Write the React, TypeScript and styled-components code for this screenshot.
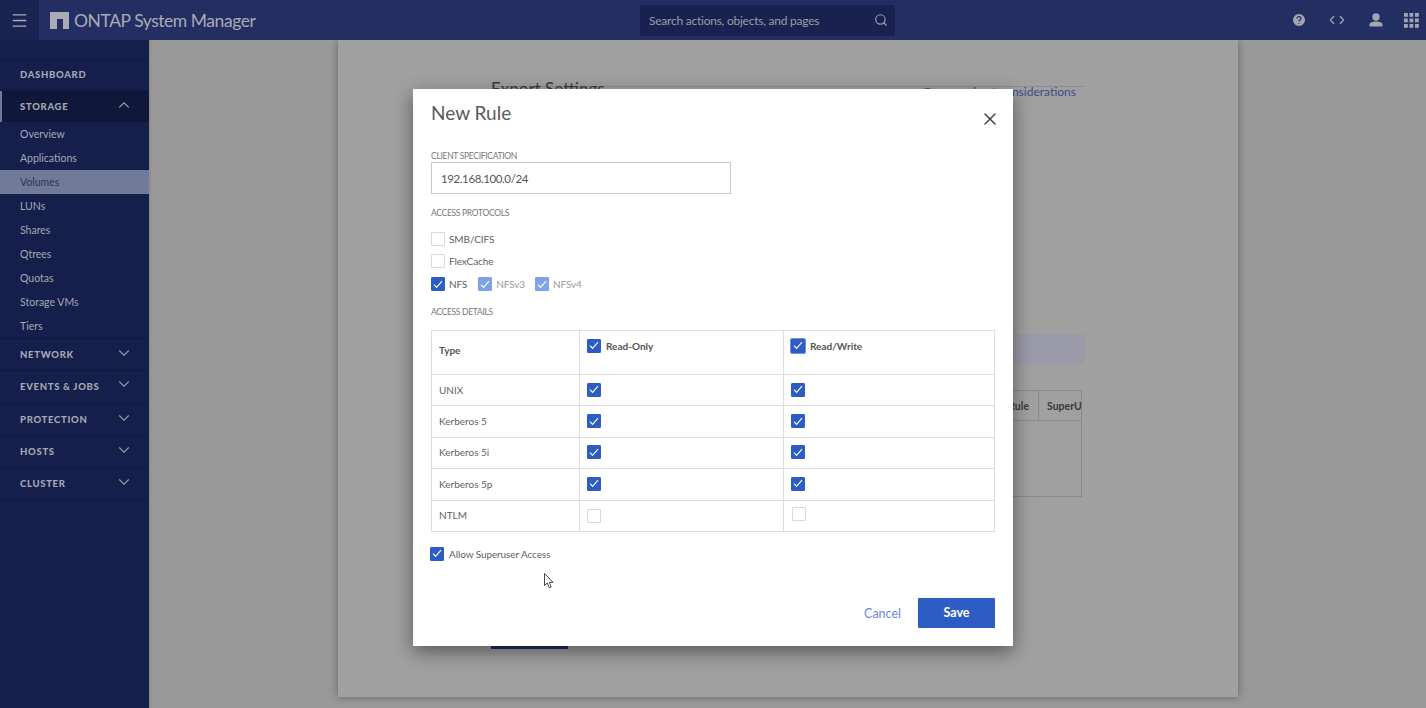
import { createGlobalStyle, styled } from "styled-components";
import { ChevronDown, ChevronUp, Search, X, Menu, CircleHelp } from "lucide-react";

const FONT = `Lato, "Noto Sans", "Liberation Sans", sans-serif`;

const GlobalStyle = createGlobalStyle`
  html, body { margin: 0; padding: 0; height: 100%; overflow: hidden; background: #999999; }
  body { font-family: ${FONT}; }
  * { box-sizing: border-box; }
`;

const Page = styled.div`
  position: relative;
  width: 1426px;
  height: 708px;
  overflow: hidden;
  display: flex;
  flex-direction: column;
  background: #999999;
`;

/* top bar */
const Header = styled.header`
  height: 40px;
  flex: none;
  display: flex;
  align-items: center;
  background: #232f63;
  position: relative;
  z-index: 2;
`;
const MenuBtn = styled.div`
  width: 39px;
  height: 40px;
  display: flex;
  align-items: center;
  justify-content: center;
  background: #1a2453;
  color: #a7a9b3;
`;
const Brand = styled.div`
  display: flex;
  align-items: center;
  gap: 5px;
  margin-left: 11px;
  width: 590px;
  color: #a9abb5;
  font-size: 17.5px;
  letter-spacing: -0.45px;
  white-space: nowrap;
`;
const SearchBox = styled.div`
  width: 255px;
  height: 31px;
  display: flex;
  align-items: center;
  justify-content: space-between;
  padding: 0 7px 0 9px;
  background: #18214f;
  color: #9c9eab;
  font-size: 12px;
  letter-spacing: -0.24px;
`;
const HeaderIcons = styled.div`
  margin-left: auto;
  display: flex;
  align-items: center;
  gap: 22px;
  padding-right: 7px;
  color: #a3a5b0;
`;
const GridIcon = styled.svg`
  margin-left: -3px;
`;

/* body */
const Body = styled.div`
  flex: 1;
  display: flex;
  min-height: 0;
`;
const Side = styled.nav`
  width: 149px;
  flex: none;
  padding-top: 19px;
  background: #141f4c;
  box-shadow: 2px 0 0 #8f8f8f;
`;
const Section = styled.div<{ $open?: boolean; $h?: number; $pb?: number }>`
  height: ${(p) => p.$h ?? 32}px;
  display: flex;
  align-items: center;
  justify-content: space-between;
  padding: 0 16px ${(p) => p.$pb ?? 0}px 20px;
  border-top: 1px solid #10183c;
  background: ${(p) => (p.$open ? "#10183a" : "transparent")};
  box-shadow: ${(p) => (p.$open ? "inset 2px 0 0 #6f7b99" : "none")};
  color: #a6a8b2;
  font-size: 9.5px;
  font-weight: 900;
  letter-spacing: 0.7px;
  white-space: nowrap;
  svg {
    flex: none;
    margin-top: -4px;
    color: #9295a3;
  }
`;
const SubItem = styled.div<{ $active?: boolean }>`
  height: 24px;
  display: flex;
  align-items: center;
  padding-left: 20px;
  font-size: 10.5px;
  color: ${(p) => (p.$active ? "#2d3550" : "#a6a8b2")};
  background: ${(p) => (p.$active ? "#6f7b99" : "transparent")};
`;
const SideEnd = styled.div`
  border-top: 1px solid #10183c;
`;

/* page behind the dialog */
const Main = styled.main`
  flex: 1;
  padding-left: 189px;
`;
const Card = styled.section`
  width: 900px;
  height: 657px;
  padding: 46px 153px 0;
  background: #a0a0a0;
  box-shadow: 0 0 8px rgba(0, 0, 0, 0.35);
`;
const CardHead = styled.div`
  height: 260px;
  width: 594px;
  border-top: 1px solid #8e8e8e;
  display: flex;
  justify-content: space-between;
  align-items: flex-start;
  padding: 0 9px 0 0;
`;
const CardTitle = styled.span`
  margin-top: -6px;
  font-size: 17px;
  line-height: 16px;
  color: #3a3a3a;
`;
const CardLink = styled.span`
  margin-top: -1px;
  color: #3e4a85;
  font-size: 12px;
  line-height: 11px;
`;
const Band = styled.div`
  width: 594px;
  height: 30px;
  margin-top: -12px;
  background: #9a9aa8;
`;
const GhostTable = styled.div`
  margin: 26px 0 0 445px;
  width: 146px;
  height: 107px;
  border: 1px solid #8a8a8a;
  display: flex;
  justify-content: flex-end;
  align-items: flex-start;
  color: #3a3a3a;
  font-size: 10.5px;
  font-weight: 700;
`;
const GhostCell = styled.div`
  height: 30px;
  line-height: 30px;
  border-bottom: 1px solid #8a8a8a;
  white-space: nowrap;
`;
const GhostRule = styled(GhostCell)`
  flex: 1;
  padding-right: 9px;
  text-align: right;
`;
const GhostSuper = styled(GhostCell)`
  width: 43px;
  padding-left: 8px;
  border-left: 1px solid #8a8a8a;
`;
const GhostButton = styled.div`
  width: 77px;
  height: 30px;
  margin-top: 122px;
  background: #1c2a66;
`;

/* dialog */
const Dialog = styled.div`
  position: absolute;
  left: 413px;
  top: 89px;
  z-index: 3;
  width: 600px;
  height: 557px;
  padding: 0 18px;
  background: #ffffff;
  box-shadow: 0 6px 18px rgba(0, 0, 0, 0.45);
  color: #5c5c5c;
`;
const TitleRow = styled.div`
  height: 61px;
  display: flex;
  align-items: flex-start;
  justify-content: space-between;
  padding-top: 12px;
`;
const Title = styled.h2`
  margin: 0;
  font-size: 19px;
  font-weight: 400;
  line-height: 24px;
  color: #5a5a5a;
`;
const CloseBtn = styled.div`
  color: #444444;
  margin: 8px -5px 0 0;
  height: 20px;
`;
const Label = styled.div`
  font-size: 8.5px;
  line-height: 12px;
  color: #777777;
  letter-spacing: -0.3px;
`;
const Field = styled.div`
  width: 300px;
  height: 32px;
  margin: 0 0 13px;
  display: flex;
  align-items: center;
  padding-left: 9px;
  border: 1px solid #c9c9c9;
  font-size: 11.5px;
  letter-spacing: -0.4px;
  color: #555555;
`;
const Row = styled.div<{ $top?: number; $mb?: number; $left?: number }>`
  display: flex;
  align-items: center;
  height: 14px;
  margin: ${(p) => p.$top ?? 0}px 0 ${(p) => p.$mb ?? 0}px ${(p) => p.$left ?? 0}px;
`;
const Option = styled.label<{ $muted?: boolean; $gap?: number; $inner?: number }>`
  display: flex;
  align-items: center;
  gap: ${(p) => p.$inner ?? 4}px;
  margin-right: ${(p) => p.$gap ?? 0}px;
  font-size: 10px;
  letter-spacing: -0.1px;
  color: ${(p) => (p.$muted ? "#9a9a9a" : "#5f5f5f")};
`;
const Box = styled.span<{ $on?: boolean; $muted?: boolean; $focus?: boolean }>`
  width: 14px;
  height: 14px;
  flex: none;
  display: inline-flex;
  align-items: center;
  justify-content: center;
  border-radius: 1px;
  border: 1px solid ${(p) => (p.$on ? (p.$muted ? "#7fa3e6" : "#2d5cc5") : "#d9d9d9")};
  background: ${(p) => (p.$on ? (p.$muted ? "#7fa3e6" : "#2d5cc5") : "#fff")};
  box-shadow: ${(p) => (p.$focus ? "0 0 0 1px #6d8fe0" : "none")};
`;
const Check = () => (
  <svg width="10" height="9" viewBox="0 0 10 9" fill="none" stroke="#fff" strokeWidth="1.1">
    <path d="M1 4.6 L3.6 7.4 L9 1.2" />
  </svg>
);
const CheckBox = (p: { on?: boolean; muted?: boolean; focus?: boolean }) => (
  <Box $on={p.on} $muted={p.muted} $focus={p.focus}>
    {p.on && <Check />}
  </Box>
);
const Table = styled.table`
  width: 563px;
  margin: 12px 0 15px;
  border-collapse: collapse;
  table-layout: fixed;
  font-size: 10px;
  color: #5f5f5f;
`;
const Th = styled.th`
  height: 44px;
  padding: 0 7px 14px;
  border: 1px solid #dedede;
  text-align: left;
  font-size: 10px;
  font-weight: 700;
  color: #555555;
`;
const TypeTh = styled(Th)`
  padding: 0 7px 6px;
`;
const ThInner = styled.div`
  display: flex;
  align-items: center;
  gap: 5px;
`;
const Td = styled.td`
  height: 31.4px;
  padding: 0 7px 1px;
  border: 1px solid #dedede;
  vertical-align: middle;
`;
const CellBox = styled.div<{ $x?: number; $y?: number }>`
  display: flex;
  margin: ${(p) => p.$y ?? 0}px 0 0 ${(p) => p.$x ?? 0}px;
`;
const Actions = styled.div`
  display: flex;
  justify-content: flex-end;
  align-items: center;
  gap: 17px;
  margin-top: 37px;
`;
const Cancel = styled.span`
  color: #6d87e0;
  font-size: 12.5px;
  padding-top: 2px;
`;
const Save = styled.button`
  width: 77px;
  height: 30px;
  padding: 0;
  border: 0;
  border-radius: 1px;
  background: #2d5cc5;
  color: #fff;
  font-family: inherit;
  font-size: 12.5px;
  font-weight: 700;
`;
const Cursor = styled.svg`
  position: absolute;
  left: 131px;
  top: 484px;
`;

const subItems = ["Overview", "Applications", "Volumes", "LUNs", "Shares", "Qtrees", "Quotas", "Storage VMs", "Tiers"];
const sections = [
  { name: "NETWORK", h: 32, pb: 0 },
  { name: "EVENTS & JOBS", h: 33, pb: 2 },
  { name: "PROTECTION", h: 32, pb: 0 },
  { name: "HOSTS", h: 32, pb: 0 },
  { name: "CLUSTER", h: 32, pb: 0 },
];
const rules = [
  { name: "UNIX", on: true },
  { name: "Kerberos 5", on: true },
  { name: "Kerberos 5i", on: true },
  { name: "Kerberos 5p", on: true },
  { name: "NTLM", on: false },
];

export default function App() {
  return (
    <Page>
      <GlobalStyle />
      <Header>
        <MenuBtn>
          <Menu size={19} strokeWidth={1.6} />
        </MenuBtn>
        <Brand>
          <svg width="19" height="17" viewBox="0 0 19 17">
            <path d="M0 0H19V17H13V7H7V17H0Z" fill="#a9abb5" />
          </svg>
          ONTAP System Manager
        </Brand>
        <SearchBox>
          Search actions, objects, and pages
          <Search size={14} />
        </SearchBox>
        <HeaderIcons>
          <CircleHelp size={16} fill="#a3a5b0" stroke="#232f63" />
          <svg width="16" height="12" viewBox="0 0 16 12" fill="none" stroke="currentColor" strokeWidth="1.2">
            <path d="M5 2 L1.5 6 L5 10 M11 2 L14.5 6 L11 10" />
          </svg>
          <svg width="18" height="14" viewBox="0 0 18 14" fill="currentColor">
            <circle cx="9" cy="4" r="3.7" />
            <path d="M2.5 13.5 V11.6 C2.5 9.6 5.5 8.6 9 8.6 C12.5 8.6 15.5 9.6 15.5 11.6 V13.5 Z" />
          </svg>
          <GridIcon width="15" height="15" viewBox="0 0 15 15" fill="currentColor">
            {[0, 5.5, 11].flatMap((y) =>
              [0, 5.5, 11].map((x) => <rect key={`${x}-${y}`} x={x} y={y} width="3.8" height="3.8" />)
            )}
          </GridIcon>
        </HeaderIcons>
      </Header>
      <Body>
        <Side>
          <Section $h={31} $pb={2}>DASHBOARD</Section>
          <Section $open>
            STORAGE
            <ChevronUp size={18} strokeWidth={1.5} />
          </Section>
          {subItems.map((s) => (
            <SubItem key={s} $active={s === "Volumes"}>
              {s}
            </SubItem>
          ))}
          {sections.map((s) => (
            <Section key={s.name} $h={s.h} $pb={s.pb}>
              {s.name}
              <ChevronDown size={18} strokeWidth={1.5} />
            </Section>
          ))}
          <SideEnd />
        </Side>
        <Main>
          <Card>
            <CardHead>
              <CardTitle>Export Settings</CardTitle>
              <CardLink>Compare host considerations</CardLink>
            </CardHead>
            <Band />
            <GhostTable>
              <GhostRule>Rule</GhostRule>
              <GhostSuper>SuperU</GhostSuper>
            </GhostTable>
            <GhostButton />
          </Card>
        </Main>
      </Body>
      <Dialog>
        <TitleRow>
          <Title>New Rule</Title>
          <CloseBtn>
            <X size={20} strokeWidth={1.8} />
          </CloseBtn>
        </TitleRow>
        <Label>CLIENT SPECIFICATION</Label>
        <Field>192.168.100.0/24</Field>
        <Label>ACCESS PROTOCOLS</Label>
        <Row $top={13} $mb={8}>
          <Option>
            <CheckBox />
            SMB/CIFS
          </Option>
        </Row>
        <Row $mb={9}>
          <Option>
            <CheckBox />
            FlexCache
          </Option>
        </Row>
        <Row $mb={15}>
          <Option $gap={11}>
            <CheckBox on />
            NFS
          </Option>
          <Option $gap={10} $muted>
            <CheckBox on muted />
            NFSv3
          </Option>
          <Option $muted>
            <CheckBox on muted />
            NFSv4
          </Option>
        </Row>
        <Label>ACCESS DETAILS</Label>
        <Table>
          <colgroup>
            <col width="148" />
            <col width="204" />
            <col width="211" />
          </colgroup>
          <thead>
            <tr>
              <TypeTh>Type</TypeTh>
              <Th>
                <ThInner>
                  <CheckBox on />
                  Read-Only
                </ThInner>
              </Th>
              <Th>
                <ThInner>
                  <CheckBox on focus />
                  Read/Write
                </ThInner>
              </Th>
            </tr>
          </thead>
          <tbody>
            {rules.map((r) => (
              <tr key={r.name}>
                <Td>{r.name}</Td>
                <Td>
                  <CellBox $y={r.on ? 0 : 1}>
                    <CheckBox on={r.on} />
                  </CellBox>
                </Td>
                <Td>
                  <CellBox $x={r.on ? 0 : 1} $y={r.on ? 0 : -3}>
                    <CheckBox on={r.on} />
                  </CellBox>
                </Td>
              </tr>
            ))}
          </tbody>
        </Table>
        <Row $left={-1}>
          <Option $inner={5}>
            <CheckBox on />
            Allow Superuser Access
          </Option>
        </Row>
        <Actions>
          <Cancel>Cancel</Cancel>
          <Save>Save</Save>
        </Actions>
        <Cursor width="10" height="16" viewBox="0 0 10 16">
          <path d="M0.5 0.5 V12.5 L3.3 10 L5.2 14.8 L7.2 14 L5.3 9.4 H9 Z" fill="#fff" stroke="#333" strokeWidth="0.9" />
        </Cursor>
      </Dialog>
    </Page>
  );
}
